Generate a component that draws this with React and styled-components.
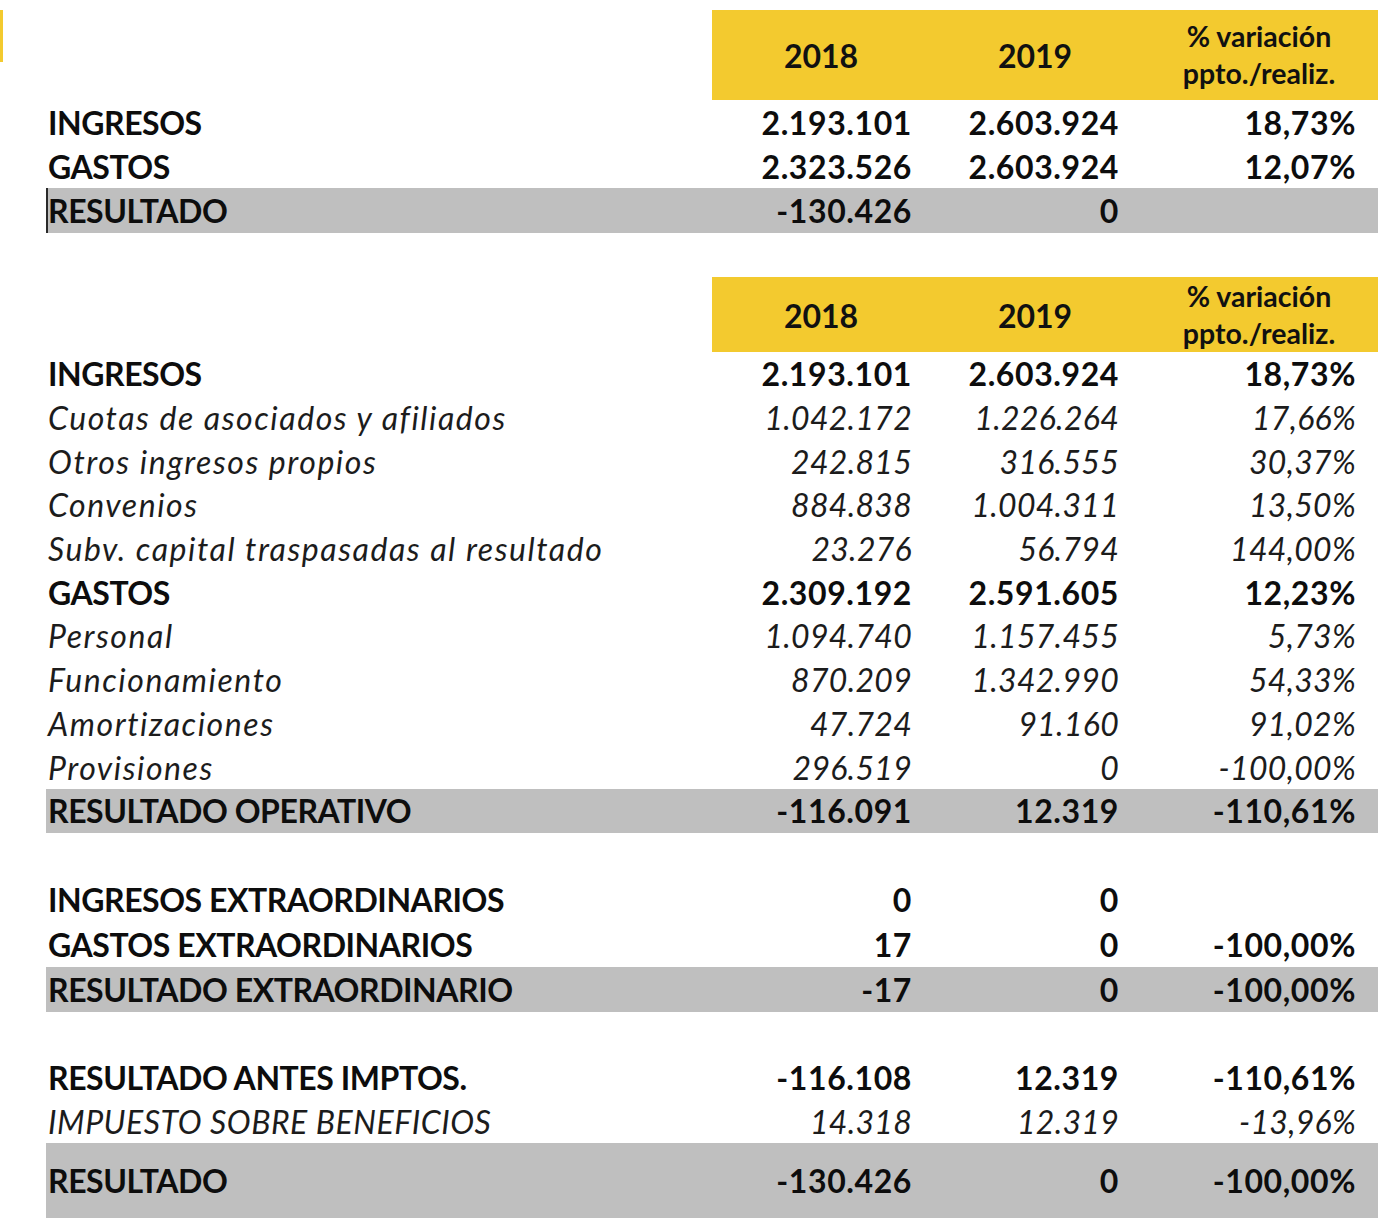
import React from 'react';
import styled, { createGlobalStyle } from 'styled-components';

const GlobalStyle = createGlobalStyle`
  html, body {
    margin: 0;
    padding: 0;
    background: #ffffff;
  }
  body {
    font-family: Lato, 'Open Sans', sans-serif;
    color: #111;
  }
`;

const YELLOW = '#f3ca2f';
const GREY = '#bfbfbf';
const COLS = '666px 218px 210px 238px';
const PADS = [18, 21, 22];

const Page = styled.div`
  display: flex;
  align-items: flex-start;
  padding-top: 10px;
  width: 1398px;
  height: 1218px;
`;

const Mark = styled.div`
  width: 3px;
  height: 52px;
  background: ${YELLOW};
  flex-shrink: 0;
`;

const Table = styled.div`
  margin-left: 43px;
  width: 1332px;
  display: flex;
  flex-direction: column;
`;

const HeaderRow = styled.div`
  display: grid;
  grid-template-columns: ${COLS};
  height: ${p => p.$h}px;
`;

const HeaderCell = styled.div`
  background: ${YELLOW};
  display: flex;
  align-items: center;
  justify-content: center;
  text-align: center;
  font-weight: 700;
  font-size: ${p => (p.$small ? 28.5 : 32)}px;
  line-height: ${p => (p.$small ? '37px' : '1')};
  padding-top: ${p => (p.$small ? 0 : 2)}px;
  box-sizing: border-box;
`;

const Row = styled.div`
  display: grid;
  grid-template-columns: ${COLS};
  align-items: center;
  height: ${p => p.$h}px;
  background: ${p => (p.$total ? GREY : 'transparent')};
  font-size: 32px;
  font-weight: ${p => (p.$italic ? 400 : 700)};
  font-style: ${p => (p.$italic ? 'italic' : 'normal')};
  color: ${p => (p.$italic ? '#1c1c1c' : '#0d0d0d')};
`;

const Label = styled.div`
  height: 100%;
  display: flex;
  align-items: center;
  box-sizing: border-box;
  white-space: nowrap;
  letter-spacing: ${p => p.$spacing}px;
  border-left: ${p => (p.$cursor ? '2px solid #2a2a2a' : '2px solid transparent')};
`;

const Num = styled.div`
  text-align: right;
  padding-right: ${p => p.$pad}px;
  white-space: nowrap;
  letter-spacing: ${p => (p.$italic ? 0.3 : 0.6)}px;
`;

const Spacer = styled.div`
  height: ${p => p.$h}px;
`;

const Header = ({ h }) => (
  <HeaderRow $h={h}>
    <div />
    <HeaderCell>2018</HeaderCell>
    <HeaderCell>2019</HeaderCell>
    <HeaderCell $small>
      % variación
      <br />
      ppto./realiz.
    </HeaderCell>
  </HeaderRow>
);

const Line = ({ label, values, h = 44, italic, total, cursor, spacing }) => {
  const ls = spacing !== undefined ? spacing : italic ? 1.55 : -0.45;
  return (
    <Row $h={h} $italic={italic} $total={total}>
      <Label $cursor={cursor} $spacing={ls}>
        {label}
      </Label>
      {values.map((v, i) => (
        <Num key={i} $pad={PADS[i]} $italic={italic}>
          {v}
        </Num>
      ))}
    </Row>
  );
};

const summary = [
  { label: 'INGRESOS', values: ['2.193.101', '2.603.924', '18,73%'], h: 44 },
  { label: 'GASTOS', values: ['2.323.526', '2.603.924', '12,07%'], h: 44 },
  { label: 'RESULTADO', values: ['-130.426', '0', ''], h: 45, total: true, cursor: true },
];

const detail = [
  { label: 'INGRESOS', values: ['2.193.101', '2.603.924', '18,73%'] },
  { label: 'Cuotas de asociados y afiliados', values: ['1.042.172', '1.226.264', '17,66%'], italic: true },
  { label: 'Otros ingresos propios', values: ['242.815', '316.555', '30,37%'], italic: true },
  { label: 'Convenios', values: ['884.838', '1.004.311', '13,50%'], italic: true },
  { label: 'Subv. capital traspasadas al resultado', values: ['23.276', '56.794', '144,00%'], italic: true },
  { label: 'GASTOS', values: ['2.309.192', '2.591.605', '12,23%'] },
  { label: 'Personal', values: ['1.094.740', '1.157.455', '5,73%'], italic: true },
  { label: 'Funcionamiento', values: ['870.209', '1.342.990', '54,33%'], italic: true },
  { label: 'Amortizaciones', values: ['47.724', '91.160', '91,02%'], italic: true },
  { label: 'Provisiones', values: ['296.519', '0', '-100,00%'], italic: true },
];

const extra = [
  { label: 'INGRESOS EXTRAORDINARIOS', values: ['0', '0', ''], h: 45 },
  { label: 'GASTOS EXTRAORDINARIOS', values: ['17', '0', '-100,00%'], h: 45 },
  { label: 'RESULTADO EXTRAORDINARIO', values: ['-17', '0', '-100,00%'], h: 45, total: true },
];

const finals = [
  { label: 'RESULTADO ANTES IMPTOS.', values: ['-116.108', '12.319', '-110,61%'], h: 44 },
  { label: 'IMPUESTO SOBRE BENEFICIOS', values: ['14.318', '12.319', '-13,96%'], h: 43, italic: true, spacing: 0.5 },
  { label: 'RESULTADO', values: ['-130.426', '0', '-100,00%'], h: 75, total: true },
];

export default function App() {
  return (
    <>
      <GlobalStyle />
      <Page>
        <Mark />
        <Table>
          <Header h={90} />
          {summary.map((r, i) => (
            <Line key={i} {...r} />
          ))}
          <Spacer $h={44} />
          <Header h={75} />
          {detail.map((r, i) => (
            <Line key={i} {...r} h={43.7} />
          ))}
          <Line label="RESULTADO OPERATIVO" values={['-116.091', '12.319', '-110,61%']} total />
          <Spacer $h={44} />
          {extra.map((r, i) => (
            <Line key={i} {...r} />
          ))}
          <Spacer $h={44} />
          {finals.map((r, i) => (
            <Line key={i} {...r} />
          ))}
        </Table>
      </Page>
    </>
  );
}
